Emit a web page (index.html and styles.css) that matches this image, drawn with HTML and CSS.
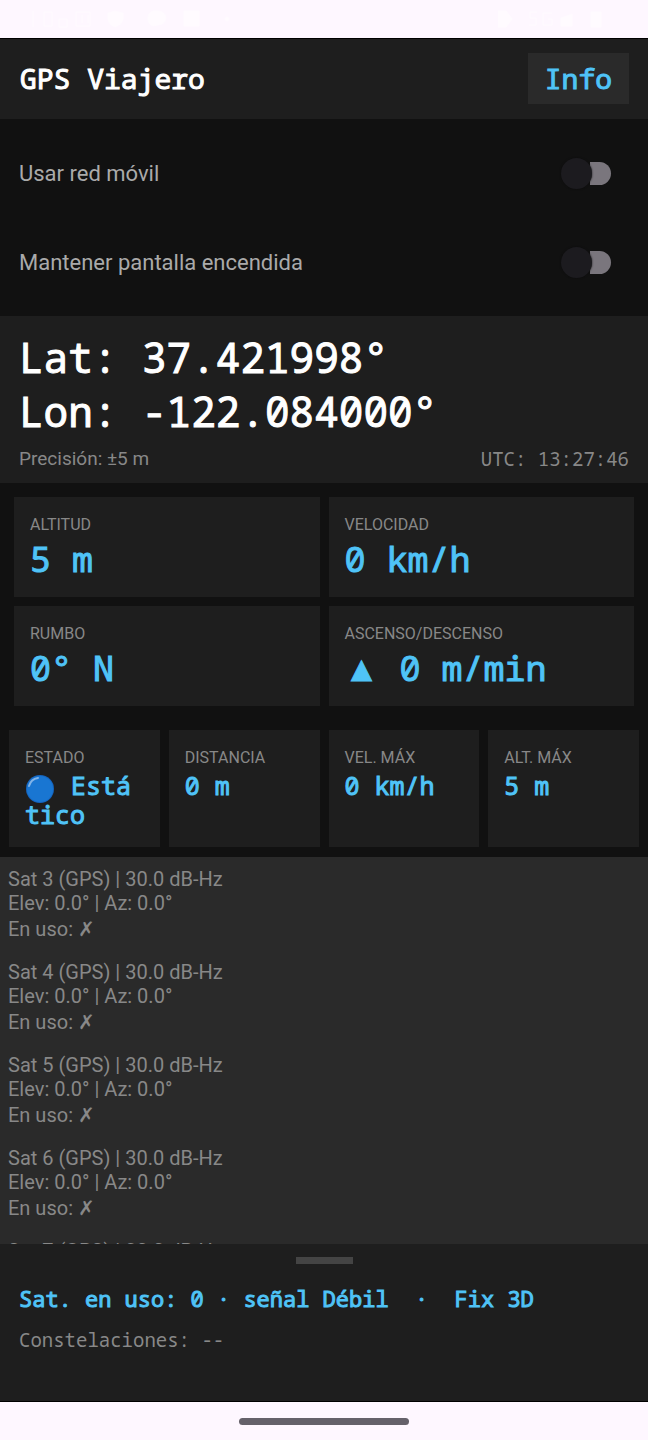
FILE: index.html
```html
<!DOCTYPE html>
<html lang="es">
<head>
  <meta charset="UTF-8" />
  <meta name="viewport" content="width=device-width, initial-scale=1.0"/>
  <title>GPS Viajero</title>
  <link rel="stylesheet" href="styles.css">
</head>
<body>
  <!-- System status bar -->
  <div class="status-bar">
    <svg class="status-icons" width="220" height="20" viewBox="0 0 220 20" aria-hidden="true">
      <path d="M13 2v16M24 3h8v14h-8zM39 10h8v8h-8zM56 3h14v14H56zM62 6v8M68 6v8" />
      <path class="solid" d="M95 2l8 2v6q0 5-8 8q-7-3-7-8V4zM138 2a8 7 0 0 1 0 14l-5 1a8 8 0 0 1 0-15zM164 2h15v15h-15z" />
      <circle class="solid" cx="207" cy="10" r="2" />
    </svg>
    <svg class="status-icons" width="110" height="20" viewBox="0 0 110 20" aria-hidden="true">
      <path class="solid" d="M0 2h8l6 8-6 8H0zM63 17V9l11-4v12zM93 3h10v15H93z" />
      <path d="M39 3h-7v6h6v7h-7M54 4h-9v12h9v-6h-4" />
    </svg>
  </div>

  <header class="header">
    <h1>GPS Viajero</h1>
    <button type="button" class="info-btn">Info</button>
  </header>

  <main class="main">
    <div class="settings">
      <div class="setting">
        <label for="red">Usar red móvil</label>
        <input type="checkbox" id="red" class="switch" />
      </div>
      <div class="setting">
        <label for="pantalla">Mantener pantalla encendida</label>
        <input type="checkbox" id="pantalla" class="switch" />
      </div>
    </div>

    <section class="position">
      <div class="coord">Lat: 37.421998°</div>
      <div class="coord">Lon: -122.084000°</div>
      <div class="position-info">
        <span>Precisión: ±5 m</span>
        <span class="utc">UTC: 13:27:46</span>
      </div>
    </section>

    <section class="cards">
      <div class="card">
        <div class="label">ALTITUD</div>
        <div class="value">5 m</div>
      </div>
      <div class="card">
        <div class="label">VELOCIDAD</div>
        <div class="value">0 km/h</div>
      </div>
      <div class="card">
        <div class="label">RUMBO</div>
        <div class="value">0° N</div>
      </div>
      <div class="card">
        <div class="label">ASCENSO/DESCENSO</div>
        <div class="value"><span class="arrow">▲</span> 0 m/min</div>
      </div>
    </section>

    <section class="stats">
      <div class="card">
        <div class="label">ESTADO</div>
        <div class="value"><svg class="dot" viewBox="0 0 31 28" role="img" aria-label="Azul">
            <circle cx="15" cy="14" r="14" fill="#1565c0" />
            <circle cx="15" cy="14" r="13" fill="#1976d2" />
            <path d="M4 11Q6 4 13 3" fill="none" stroke="#82b4e8" stroke-width="2" stroke-linecap="round" />
          </svg> Estático</div>
      </div>
      <div class="card">
        <div class="label">DISTANCIA</div>
        <div class="value">0 m</div>
      </div>
      <div class="card">
        <div class="label">VEL. MÁX</div>
        <div class="value">0 km/h</div>
      </div>
      <div class="card">
        <div class="label">ALT. MÁX</div>
        <div class="value">5 m</div>
      </div>
    </section>

    <ul class="satellites">
      <li>
        <div>Sat 3 (GPS) | 30.0 dB-Hz</div>
        <div>Elev: 0.0° | Az: 0.0°</div>
        <div class="used">En uso: ✗</div>
      </li>
      <li>
        <div>Sat 4 (GPS) | 30.0 dB-Hz</div>
        <div>Elev: 0.0° | Az: 0.0°</div>
        <div class="used">En uso: ✗</div>
      </li>
      <li>
        <div>Sat 5 (GPS) | 30.0 dB-Hz</div>
        <div>Elev: 0.0° | Az: 0.0°</div>
        <div class="used">En uso: ✗</div>
      </li>
      <li>
        <div>Sat 6 (GPS) | 30.0 dB-Hz</div>
        <div>Elev: 0.0° | Az: 0.0°</div>
        <div class="used">En uso: ✗</div>
      </li>
      <li>
        <div>Sat 7 (GPS) | 30.0 dB-Hz</div>
      </li>
    </ul>
  </main>

  <!-- Bottom sheet, collapsed -->
  <footer class="sheet">
    <div class="handle"></div>
    <div class="summary">Sat. en uso: 0 · señal Débil  ·  Fix 3D</div>
    <div class="constellations">Constelaciones: --</div>
  </footer>

  <div class="nav-bar"><div class="nav-pill"></div></div>
</body>
</html>
```
FILE: styles.css
```css
* {
  box-sizing: border-box;
}

body {
  margin: 0;
  height: 100vh;
  display: flex;
  flex-direction: column;
  background: #111111;
  color: #888888;
  font-family: Roboto, sans-serif;
}

.status-bar {
  flex: none;
  height: 38px;
  padding: 0 40px 0 20px;
  display: flex;
  align-items: center;
  justify-content: space-between;
  background: #fef7ff;
}

.status-icons {
  fill: none;
  stroke: #fffbff;
  stroke-width: 1;
}

.status-icons .solid {
  fill: #fffbff;
}

.header {
  flex: none;
  height: 81px;
  padding: 0 19px 2px 20px;
  display: flex;
  align-items: center;
  justify-content: space-between;
  background: #1e1e1e;
  border-top: 1px solid #000000;
}

h1,
.info-btn,
.coord,
.utc,
.value,
.sheet {
  font-family: "Droid Sans Mono", "Noto Sans Mono", "DejaVu Sans Mono", monospace;
}

/* Medium weight for the mono texts: the font has only regular and bold */
h1,
.info-btn,
.coord,
.value,
.summary {
  -webkit-text-stroke: 1px currentColor;
}

h1 {
  margin: 0;
  font-size: 28px;
  font-weight: normal;
  color: #ffffff;
}

.info-btn {
  height: 51px;
  padding: 0 17px;
  border: none;
  background: #2a2a2a;
  color: #4fc3f7;
  font-size: 28px;
  cursor: pointer;
}

.main {
  flex: 1;
  min-height: 0;
  display: flex;
  flex-direction: column;
}

.settings {
  flex: none;
  padding: 10px 19px 9px;
}

.setting {
  height: 89px;
  display: flex;
  align-items: center;
  justify-content: space-between;
  font-size: 22px;
  color: #aaaaaa;
}

.switch {
  appearance: none;
  width: 45px;
  height: 23px;
  margin: 0 18px 0 0;
  border-radius: 12px;
  background: #7a767d;
}

.switch::before {
  content: "";
  display: block;
  width: 31px;
  height: 31px;
  margin: -4px 0 0 -5px;
  border-radius: 50%;
  background: #1c1b1f;
  box-shadow: 0 0 2px #0c0c0c;
}

/* Hides the end of the track under the knob */
.switch:not(:checked) {
  background: linear-gradient(to right, #111111 24px, #7a767d 24px);
}

.position {
  flex: none;
  height: 167px;
  padding: 14px 19px 0;
  background: #1e1e1e;
}

.coord {
  font-size: 41px;
  line-height: 54px;
  color: #ffffff;
}

.position-info {
  display: flex;
  justify-content: space-between;
  padding-top: 9px;
  font-size: 19px;
  line-height: 24px;
}

.cards {
  flex: none;
  display: grid;
  grid-template-columns: 1fr 1fr;
  gap: 9px;
  padding: 14px 14px 0;
}

.card {
  padding: 17px 16px;
  background: #1e1e1e;
}

.cards .card {
  height: 100px;
}

.label {
  font-size: 16px;
  line-height: 22px;
}

.value {
  color: #4fc3f7;
  font-size: 35px;
  line-height: 46px;
}

.arrow {
  display: inline-block;
  width: 34px;
  text-align: center;
}

.stats {
  flex: none;
  display: grid;
  grid-template-columns: repeat(4, 1fr);
  gap: 9px;
  padding: 24px 9px 10px;
}

.stats .card {
  height: 117px;
}

.stats .value {
  font-size: 25px;
  line-height: 29px;
  padding-top: 2px;
  word-break: break-all;
}

.dot {
  width: 31px;
  height: 28px;
  margin: -4px 0;
  vertical-align: -4px;
}

.satellites {
  flex: 1;
  min-height: 0;
  margin: 0;
  padding: 10px 8px 0;
  overflow: hidden;
  list-style: none;
  background: #2a2a2a;
  font-family: Roboto, "DejaVu Sans", sans-serif;
  font-size: 20px;
  line-height: 24px;
}

.satellites li {
  margin-bottom: 16px;
}

.used {
  line-height: 29px;
}

.sheet {
  flex: none;
  height: 158px;
  padding: 13px 19px 0;
  background: #1e1e1e;
  border-bottom: 1px solid #000000;
}

.handle {
  width: 57px;
  height: 7px;
  margin: 0 auto;
  background: #444444;
}

.summary {
  margin-top: 20px;
  font-size: 22px;
  line-height: 28px;
  color: #4fc3f7;
  white-space: pre-wrap;
}

.constellations {
  margin-top: 16px;
  font-size: 19px;
  line-height: 24px;
}

.nav-bar {
  flex: none;
  height: 38px;
  display: flex;
  align-items: center;
  justify-content: center;
  background: #fef7ff;
}

.nav-pill {
  width: 170px;
  height: 7px;
  border-radius: 4px;
  background: #65616a;
}
```
